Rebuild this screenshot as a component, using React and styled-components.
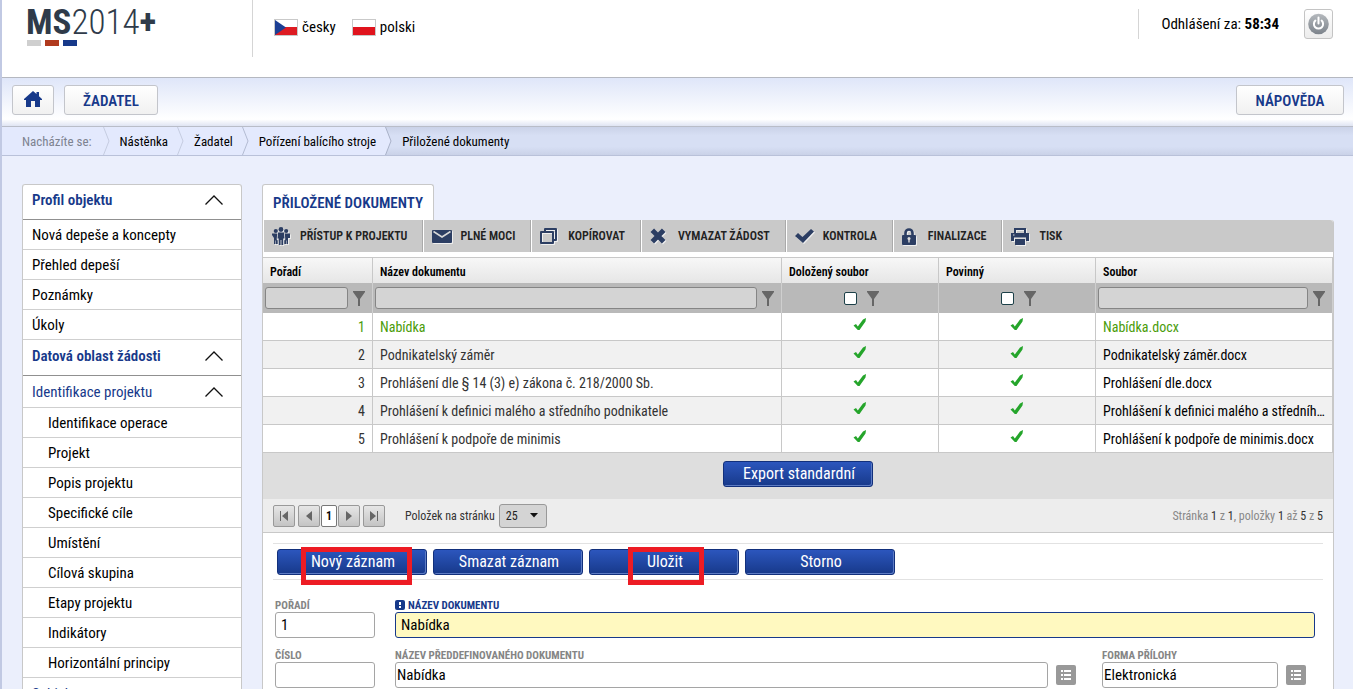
import React from 'react';
import styled, { createGlobalStyle } from 'styled-components';

const GlobalStyle = createGlobalStyle`
  *, *::after {
    box-sizing: border-box;
  }

  body {
    margin: 0;
    font-family: "Roboto Condensed", "Liberation Sans Narrow", Roboto, sans-serif;
    font-size: 15px;
    color: #000;
    background: #ebeffc;
  }

  input, button, select {
    font-family: inherit;
  }

  a {
    color: inherit;
    text-decoration: none;
  }
`;

const Page = styled.div`
  height: 100vh;
  overflow: hidden;
  border-left: 2px solid #c1c9e3;
`;

const Header = styled.header`
  display: flex;
  height: 78px;
  background: #fff;
  border-bottom: 1px solid #b5b8c0;
`;

const Brand = styled.div`
  width: 251px;
  height: 57px;
  padding: 5px 0 0 24px;
  border-right: 1px solid #d5d5d5;
  color: #2f3b4a;
`;

const BrandName = styled.div`
  font-size: 35px;
  line-height: 35px;
  font-weight: 300;

  b {
    font-weight: 700;
  }
`;

const Bars = styled.div`
  display: flex;
  gap: 4px;
  padding-left: 1px;
`;

const Bar = styled.span`
  width: 14px;
  height: 6px;
  background: ${props => props.$color};
`;

const Languages = styled.nav`
  display: flex;
  gap: 16px;
  height: 18px;
  margin: 18px 0 0 21px;
`;

const Language = styled.a`
  display: flex;
  align-items: center;
  gap: 4px;
  line-height: 18px;
`;

const Session = styled.div`
  display: flex;
  align-items: center;
  gap: 25px;
  height: 30px;
  margin: 9px 20px 0 auto;
  padding-left: 22px;
  border-left: 1px solid #d5d5d5;
`;

const PowerButton = styled.button`
  width: 29px;
  height: 30px;
  padding: 3px;
  border: 1px solid #c4c4c4;
  border-radius: 3px;
  background: linear-gradient(#fff, #ececec);
`;

const TopBar = styled.nav`
  display: flex;
  gap: 10px;
  height: 49px;
  padding: 7px 9px 0 10px;
  border-bottom: 1px solid #b9bdc8;
  background: linear-gradient(#dfe6f9, #fff 86%, #dfe4f3);
`;

const TopButton = styled.button`
  width: ${props => props.$width}px;
  height: 30px;
  margin-left: ${props => (props.$right ? 'auto' : '0')};
  padding: 2px 0 0;
  border: 1px solid #c3c5cb;
  border-radius: 3px;
  background: linear-gradient(#fff, #f1f1f1);
  color: #17398a;
  font-size: 15px;
  font-weight: 600;
`;

const Crumbs = styled.nav`
  display: flex;
  height: 29px;
  border-bottom: 1px solid #b9c1d9;
  background: linear-gradient(#cad2e8, #d7dff4 30%, #d7dff4 70%, #cad2e8);
  font-size: 13px;
  line-height: 28px;
`;

const Crumb = styled.a`
  padding: ${props => (props.$first ? '1px 11px 0 20px' : '1px 9px 0 10px')};
  background: ${props => (props.$current ? 'transparent' : '#e3e9fd')};
  color: ${props => (props.$first ? '#7d8390' : '#000')};
`;

const Body = styled.div`
  display: flex;
  align-items: flex-start;
  gap: 20px;
  padding: 28px 19px 0 20px;
`;

const Sidebar = styled.nav`
  flex: 0 0 220px;
  border: 1px solid #c8c8c8;
  border-top: none;
  border-radius: 3px;
  background: #fff;
  box-shadow: inset 0 1px 0 #c8c8c8;
`;

const SideItem = styled.a`
  display: flex;
  justify-content: space-between;
  align-items: center;
  height: ${props => (props.$group ? '32px' : '30px')};
  padding: 0 17px 0 ${props => (props.$sub ? '25px' : '9px')};
  border-bottom: 1px solid #cfcfcf;
  color: ${props => (props.$group ? '#17398a' : '#000')};
`;

const SideTitle = styled.a`
  display: flex;
  justify-content: space-between;
  height: 36px;
  padding: 0 17px 4px 9px;
  align-items: center;
  border-bottom: 1px solid #909090;
  color: #17398a;
  font-weight: 600;
`;

const Main = styled.main`
  flex: 1;
  min-width: 0;
`;

const Tab = styled.h1`
  width: fit-content;
  height: 36px;
  margin: 0;
  padding: 0 10px;
  border: 1px solid #c8c8c8;
  border-bottom: none;
  border-radius: 3px 3px 0 0;
  background: #fff;
  color: #17398a;
  font-size: 15px;
  font-weight: 600;
  line-height: 36px;
`;

const Panel = styled.section`
  border: 1px solid #c8c8c8;
  border-top: none;
  border-radius: 0 3px 0 0;
  background: #fff;
`;

const Toolbar = styled.div`
  display: flex;
  height: 32px;
  margin-bottom: 5px;
  background: #c9c9c9;
  border-radius: 0 3px 0 0;
`;

const Tool = styled.button`
  display: flex;
  align-items: center;
  gap: ${props => props.$gap || 8}px;
  padding: 0 15px 0 8px;
  border: none;
  border-left: 1px solid #fff;
  border-right: ${props => (props.$last ? 'none' : '1px solid #aaa')};
  background: none;
  color: #222;
  font-size: 12px;
  font-weight: 600;

  svg {
    filter: drop-shadow(1px 1px 0 #eee);
  }
`;

const Table = styled.table`
  width: 100%;
  table-layout: fixed;
  border-collapse: separate;
  border-spacing: 0;
  border-top: 1px solid #c8c8c8;
`;

const HeadCell = styled.th`
  height: 25px;
  padding: 2px 7px 0;
  border-right: 1px solid #c8c8c8;
  background: linear-gradient(#f7f7f7, #e6e6e6);
  font-size: 12px;
  font-weight: 600;
  text-align: left;
`;

const FilterCell = styled.td`
  height: 30px;
  padding: 0 7px 0 2px;
  border-right: 1px solid #cfcfcf;
  background: #b9b9b9;
`;

const Filter = styled.div`
  display: flex;
  align-items: center;
  justify-content: center;
  gap: 5px;
`;

const FilterInput = styled.input`
  flex: 1;
  min-width: 0;
  height: 22px;
  border: 1px solid #858585;
  border-radius: 3px;
  background: #d4d4d4;
`;

const FilterCheck = styled.input`
  appearance: none;
  width: 13px;
  height: 13px;
  margin: 0 5px 0 8px;
  border: 1px solid #1c4048;
  border-radius: 2px;
  background: #fff;
`;

const Cell = styled.td`
  height: 28px;
  padding: 1px 7px 0;
  overflow: hidden;
  border-right: 1px solid #c8c8c8;
  border-bottom: 1px solid #c8c8c8;
  font-size: 14px;
  text-align: ${props => props.$align || 'left'};
  text-overflow: ellipsis;
  white-space: nowrap;
  color: ${props => (props.$dark ? '#000' : '#333')};

  svg {
    display: block;
    margin: 0 auto 5px;
  }
`;

const Row = styled.tr`
  background: ${props => (props.$odd ? '#f1f1f1' : '#fff')};

  ${Cell} {
    ${props => props.$active && 'color: #4a9c0a;'}
  }
`;

const ExportBar = styled.div`
  display: flex;
  justify-content: center;
  height: 46px;
  padding-top: 8px;
  background: #dedede;
`;

const BlueButton = styled.button`
  width: 150px;
  height: 26px;
  padding: 0 0 2px 2px;
  border: 1px solid #12307c;
  border-radius: 3px;
  background: linear-gradient(#2c56bd, #17398a);
  box-shadow: inset -1px -1px 0 #5d7cc4;
  color: #fff;
  font-size: 16px;
`;

const Pager = styled.div`
  display: flex;
  align-items: center;
  height: 34px;
  padding: 0 10px;
  border-bottom: 1px solid #c8c8c8;
  background: #ededed;
  color: #333;
  font-size: 12px;
`;

const PageButtons = styled.div`
  display: flex;
  gap: 3px;
  margin-right: 20px;
`;

const PageButton = styled.button`
  display: flex;
  align-items: center;
  justify-content: center;
  width: 22px;
  height: 22px;
  padding: 0;
  border: 1px solid #999;
  border-radius: 2px;
  background: linear-gradient(#e6e6e6, #c4c4c4);
`;

const CurrentPage = styled.button`
  width: 16px;
  height: 22px;
  margin: 0 -2px;
  padding: 0;
  border: 1px solid #777;
  border-radius: 2px;
  background: #fff;
  font-size: 12px;
  font-weight: 600;
`;

const SizeLabel = styled.label`
  display: flex;
  align-items: center;
  gap: 4px;
`;

const SelectWrap = styled.span`
  position: relative;

  svg {
    position: absolute;
    top: 9px;
    right: 9px;
    pointer-events: none;
  }
`;

const SizeSelect = styled.select`
  appearance: none;
  width: 48px;
  height: 24px;
  padding: 0 6px;
  border: 1px solid #999;
  border-radius: 3px;
  background: #d4d4d4;
  color: #222;
  font-size: 12px;
`;

const PageInfo = styled.span`
  margin-left: auto;
  color: #888;

  span {
    color: #333;
  }
`;

const Actions = styled.div`
  display: flex;
  gap: 6px;
  height: 37px;
  margin: 10px 10px 0;
  padding: 5px 4px;
  border-top: 1px solid #e2e2e2;
  border-bottom: 1px solid #e2e2e2;
`;

const Marked = styled.div`
  position: relative;

  &::after {
    content: '';
    position: absolute;
    top: -2px;
    left: ${props => props.$left}px;
    width: ${props => props.$width}px;
    height: 38px;
    border: 5px solid #ed1c24;
    pointer-events: none;
  }
`;

const FormRow = styled.div`
  display: flex;
  gap: 20px;
  height: 50px;
  padding: 0 ${props => (props.$pickers ? '21px' : '18px')} 0 12px;
`;

const Form = styled.form`
  padding-top: 18px;
`;

const Field = styled.div`
  flex: ${props => (props.$width ? `0 0 ${props.$width}px` : '1')};
  min-width: 0;
`;

const FieldLabel = styled.label`
  display: flex;
  align-items: center;
  gap: 3px;
  height: 14px;
  color: ${props => (props.$required ? '#17398a' : '#858585')};
  font-size: 11px;
  font-weight: 700;
`;

const FieldControl = styled.div`
  display: flex;
  align-items: center;
  gap: 8px;
  padding-right: ${props => (props.$picker ? '6px' : '0')};
`;

const TextInput = styled.input`
  flex: 1;
  min-width: 0;
  height: 26px;
  padding: 0 ${props => (props.$tight ? '1px' : '5px')};
  border: 1px solid ${props => (props.$required ? '#17398a' : '#a5a5a5')};
  border-radius: 3px;
  background: ${props => (props.$required ? '#fff9c0' : '#fff')};
  color: #000;
  font-size: 15px;
`;

const ListButton = styled.button`
  width: 20px;
  height: 20px;
  padding: 0;
  border: none;
  border-radius: 2px;
  background: #999;

  svg {
    display: block;
  }
`;

const CzechFlag = () => (
  <svg width="24" height="17" viewBox="0 0 24 17">
    <rect width="24" height="17" fill="#c9c9c9" />
    <rect x="1" y="1" width="22" height="7" fill="#fff" />
    <rect x="1" y="8" width="22" height="8" fill="#dd1b22" />
    <path d="M1 1l11 7.500L1 16z" fill="#1c3f94" />
  </svg>
);

const PolishFlag = () => (
  <svg width="24" height="17" viewBox="0 0 24 17">
    <rect width="24" height="17" fill="#c9c9c9" />
    <rect x="1" y="1" width="22" height="7" fill="#fff" />
    <rect x="1" y="8" width="22" height="8" fill="#e0131d" />
  </svg>
);

const PowerIcon = () => (
  <svg width="21" height="22" viewBox="0 0 21 22">
    <defs>
      <linearGradient id="power" x1="0" y1="0" x2="0" y2="1">
        <stop offset="0" stopColor="#b5b9bd" />
        <stop offset="1" stopColor="#7c838b" />
      </linearGradient>
    </defs>
    <circle cx="10.500" cy="11" r="10.300" fill="url(#power)" />
    <path d="M7.400 7.600a4.600 4.600 0 1 0 6.200 0M10.500 4.500v6" fill="none" stroke="#fff" strokeWidth="2" strokeLinecap="round" />
  </svg>
);

const HomeIcon = () => (
  <svg width="18" height="16" viewBox="0 0 18 16">
    <path d="M9 0l3.500 3V1H15v4.300L18 8v1h-2v7h-5v-6H7v6H2V9H0V8z" fill="#17398a" />
  </svg>
);

const Chevron = () => (
  <svg width="20" height="12" viewBox="0 0 20 12">
    <path d="M1.500 10.500L10 2l8.500 8.500" fill="none" stroke="#111" strokeWidth="1.300" />
  </svg>
);

const CrumbArrow = ({ before = '#e3e9fd', after = '#e3e9fd', stroke = '#c5cce0' }) => (
  <svg width="7" height="28" viewBox="0 0 7 28">
    <rect width="7" height="28" fill={after} />
    <path d="M0 0h.5L6 14L.5 28H0z" fill={before} />
    <path d="M.5 0L6 14L.5 28" fill="none" stroke={stroke} />
  </svg>
);

const PeopleIcon = () => (
  <svg width="18" height="18" viewBox="0 0 18 18" fill="#2c3e63">
    <circle cx="9" cy="2.500" r="2.400" />
    <circle cx="3.800" cy="4" r="2.100" />
    <circle cx="14.200" cy="4" r="2.100" />
    <path d="M6 5.500h6l.5 6h-1.300V18H9.400v-5h-.8v5H6.800v-6.500H5.500z" />
    <path d="M0 6.500h5.200l-.5 6 1 1V17H4v-3.500h-.5V17H2v-6L0 8zM18 6.500h-5.200l.5 6-1 1V17H14v-3.500h.5V17H16v-6h2z" />
  </svg>
);

const MailIcon = () => (
  <svg width="20" height="13" viewBox="0 0 20 13">
    <rect width="20" height="13" rx="1" fill="#2c3e63" />
    <path d="M1.500 1.500L10 7l8.500-5.500" fill="none" stroke="#d8d8d8" strokeWidth="1.500" />
  </svg>
);

const CopyIcon = () => (
  <svg width="18" height="18" viewBox="0 0 18 18" fill="none" stroke="#2c3e63" strokeWidth="2" strokeLinejoin="round">
    <path d="M5 4V2h11v11h-2" />
    <rect x="1" y="5" width="12" height="11" />
  </svg>
);

const CrossIcon = () => (
  <svg width="16" height="16" viewBox="0 0 16 16">
    <path d="M2.300 2.300l11.400 11.400M13.700 2.300l-11.400 11.400" stroke="#2c3e63" strokeWidth="5" />
  </svg>
);

const TickIcon = () => (
  <svg width="20" height="16" viewBox="0 0 20 16">
    <path d="M0 8l3-3 4.500 4L16 1l3 2.500L8 15z" fill="#2c3e63" />
  </svg>
);

const LockIcon = () => (
  <svg width="14" height="17" viewBox="0 0 14 17">
    <path d="M3.500 8V5a3.500 3.500 0 0 1 7 0v3" fill="none" stroke="#2c3e63" strokeWidth="2.600" />
    <rect y="7" width="14" height="10" rx="1" fill="#2c3e63" />
    <circle cx="7" cy="10.500" r="1.500" fill="#ddd" />
    <path d="M6.300 11h1.400v3.500H6.300z" fill="#ddd" />
  </svg>
);

const PrintIcon = () => (
  <svg width="18" height="17" viewBox="0 0 18 17">
    <path d="M4 6V1h10v5" fill="none" stroke="#2c3e63" strokeWidth="2" />
    <path d="M0 5h18v8h-3V9.500H3V13H0z" fill="#2c3e63" />
    <path d="M4 11h10v6H4z" fill="#2c3e63" />
    <path d="M2 7h1.500" stroke="#ddd" />
  </svg>
);

const FunnelIcon = () => (
  <svg width="12" height="15" viewBox="0 0 12 15">
    <path d="M0 0h12v1L7 8v7H5V8L0 1z" fill="#666" />
  </svg>
);

const GreenCheck = () => (
  <svg width="14" height="13" viewBox="0 0 14 13">
    <path d="M.5 7.500L3 6l1.800 2.500L10 1.500 13 0l-.5 3.500L6.500 12H4.800z" fill="#25a52b" />
  </svg>
);

const PagerIcon = ({ d }) => (
  <svg width="10" height="10" viewBox="0 0 10 10">
    <path d={d} fill="#666" />
  </svg>
);

const CaretIcon = () => (
  <svg width="8" height="5" viewBox="0 0 8 5">
    <path d="M0 0h8L4 4.500z" fill="#111" />
  </svg>
);

const RequiredIcon = () => (
  <svg width="10" height="10" viewBox="0 0 10 10">
    <rect width="10" height="10" rx="2" fill="#17398a" />
    <path d="M4 2h2v3H4zM4 6h2v2H4z" fill="#fff" />
  </svg>
);

const ListIcon = () => (
  <svg width="20" height="20" viewBox="0 0 20 20">
    <path d="M5 5h2v2H5zM8 5h7v2H8zM5 9h2v2H5zM8 9h7v2H8zM5 13h2v2H5zM8 13h7v2H8z" fill="#fff" />
  </svg>
);

const tools = [
  { label: 'PŘÍSTUP K PROJEKTU', icon: <PeopleIcon />, gap: 10 },
  { label: 'PLNÉ MOCI', icon: <MailIcon /> },
  { label: 'KOPÍROVAT', icon: <CopyIcon />, gap: 10 },
  { label: 'VYMAZAT ŽÁDOST', icon: <CrossIcon />, gap: 12 },
  { label: 'KONTROLA', icon: <TickIcon /> },
  { label: 'FINALIZACE', icon: <LockIcon />, gap: 12 },
  { label: 'TISK', icon: <PrintIcon />, gap: 10 },
];

const documents = [
  { name: 'Nabídka', file: 'Nabídka.docx' },
  { name: 'Podnikatelský záměr', file: 'Podnikatelský záměr.docx' },
  { name: 'Prohlášení dle § 14 (3) e) zákona č. 218/2000 Sb.', file: 'Prohlášení dle.docx' },
  { name: 'Prohlášení k definici malého a středního podnikatele', file: 'Prohlášení k definici malého a středníh...' },
  { name: 'Prohlášení k podpoře de minimis', file: 'Prohlášení k podpoře de minimis.docx' },
];

const profileItems = ['Nová depeše a koncepty', 'Přehled depeší', 'Poznámky', 'Úkoly'];

const projectItems = [
  'Identifikace operace',
  'Projekt',
  'Popis projektu',
  'Specifické cíle',
  'Umístění',
  'Cílová skupina',
  'Etapy projektu',
  'Indikátory',
  'Horizontální principy',
];

const App = () => (
  <>
    <GlobalStyle />
    <Page>
      <Header>
        <Brand>
          <BrandName><b>MS</b>2014<b>+</b></BrandName>
          <Bars>
            <Bar $color="#cfcfcf" />
            <Bar $color="#b03a1e" />
            <Bar $color="#17398a" />
          </Bars>
        </Brand>
        <Languages>
          <Language href="#cs"><CzechFlag />česky</Language>
          <Language href="#pl"><PolishFlag />polski</Language>
        </Languages>
        <Session>
          <span>Odhlášení za: <b>58:34</b></span>
          <PowerButton type="button" aria-label="Odhlásit"><PowerIcon /></PowerButton>
        </Session>
      </Header>
      <TopBar>
        <TopButton type="button" $width={42} aria-label="Domů"><HomeIcon /></TopButton>
        <TopButton type="button" $width={94}>ŽADATEL</TopButton>
        <TopButton type="button" $width={108} $right>NÁPOVĚDA</TopButton>
      </TopBar>
      <Crumbs>
        <Crumb as="span" $first>Nacházíte se:</Crumb>
        <CrumbArrow />
        <Crumb href="#nastenka">Nástěnka</Crumb>
        <CrumbArrow />
        <Crumb href="#zadatel">Žadatel</Crumb>
        <CrumbArrow stroke="#b3bbd2" />
        <Crumb href="#projekt">Pořízení balícího stroje</Crumb>
        <CrumbArrow after="none" stroke="#a9b1c8" />
        <Crumb href="#dokumenty" $current>Přiložené dokumenty</Crumb>
      </Crumbs>
      <Body>
        <Sidebar>
          <SideTitle href="#profil">Profil objektu <Chevron /></SideTitle>
          {profileItems.map(item => (
            <SideItem href="#profil" key={item}>{item}</SideItem>
          ))}
          <SideTitle href="#data">Datová oblast žádosti <Chevron /></SideTitle>
          <SideItem href="#identifikace" $group>Identifikace projektu <Chevron /></SideItem>
          {projectItems.map(item => (
            <SideItem href="#identifikace" key={item} $sub>{item}</SideItem>
          ))}
          <SideItem href="#subjekty" $group>Subjekty <Chevron /></SideItem>
        </Sidebar>
        <Main>
          <Tab>PŘILOŽENÉ DOKUMENTY</Tab>
          <Panel>
            <Toolbar>
              {tools.map((tool, i) => (
                <Tool type="button" key={tool.label} $gap={tool.gap} $last={i === tools.length - 1}>
                  {tool.icon}
                  {tool.label}
                </Tool>
              ))}
            </Toolbar>
            <Table>
              <colgroup>
                <col width="110" />
                <col />
                <col width="157" />
                <col width="157" />
                <col width="237" />
              </colgroup>
              <thead>
                <tr>
                  <HeadCell>Pořadí</HeadCell>
                  <HeadCell>Název dokumentu</HeadCell>
                  <HeadCell>Doložený soubor</HeadCell>
                  <HeadCell>Povinný</HeadCell>
                  <HeadCell>Soubor</HeadCell>
                </tr>
                <tr>
                  <FilterCell><Filter><FilterInput aria-label="Pořadí" /><FunnelIcon /></Filter></FilterCell>
                  <FilterCell><Filter><FilterInput aria-label="Název dokumentu" /><FunnelIcon /></Filter></FilterCell>
                  <FilterCell><Filter><FilterCheck type="checkbox" aria-label="Doložený soubor" /><FunnelIcon /></Filter></FilterCell>
                  <FilterCell><Filter><FilterCheck type="checkbox" aria-label="Povinný" /><FunnelIcon /></Filter></FilterCell>
                  <FilterCell><Filter><FilterInput aria-label="Soubor" /><FunnelIcon /></Filter></FilterCell>
                </tr>
              </thead>
              <tbody>
                {documents.map((doc, i) => (
                  <Row key={doc.name} $odd={i % 2 === 1} $active={i === 0}>
                    <Cell $align="right">{i + 1}</Cell>
                    <Cell>{doc.name}</Cell>
                    <Cell><GreenCheck /></Cell>
                    <Cell><GreenCheck /></Cell>
                    <Cell $dark>{doc.file}</Cell>
                  </Row>
                ))}
              </tbody>
            </Table>
            <ExportBar>
              <BlueButton type="button">Export standardní</BlueButton>
            </ExportBar>
            <Pager>
              <PageButtons>
                <PageButton type="button" aria-label="První"><PagerIcon d="M1 0h1v10H1zM9 0v10L3 5z" /></PageButton>
                <PageButton type="button" aria-label="Předchozí"><PagerIcon d="M8 0v10L2 5z" /></PageButton>
                <CurrentPage type="button">1</CurrentPage>
                <PageButton type="button" aria-label="Další"><PagerIcon d="M2 0v10l6-5z" /></PageButton>
                <PageButton type="button" aria-label="Poslední"><PagerIcon d="M1 0v10l6-5zM8 0h1v10H8z" /></PageButton>
              </PageButtons>
              <SizeLabel>
                Položek na stránku
                <SelectWrap>
                  <SizeSelect defaultValue="25">
                    <option>25</option>
                    <option>50</option>
                  </SizeSelect>
                  <CaretIcon />
                </SelectWrap>
              </SizeLabel>
              <PageInfo>
                Stránka <span>1</span> z <span>1</span>, položky <span>1</span> až <span>5</span> z <span>5</span>
              </PageInfo>
            </Pager>
            <Actions>
              <Marked $left={24} $width={111}><BlueButton type="button">Nový záznam</BlueButton></Marked>
              <BlueButton type="button">Smazat záznam</BlueButton>
              <Marked $left={39} $width={76}><BlueButton type="button">Uložit</BlueButton></Marked>
              <BlueButton type="button">Storno</BlueButton>
            </Actions>
            <Form>
              <FormRow>
                <Field $width={100}>
                  <FieldLabel htmlFor="order">POŘADÍ</FieldLabel>
                  <FieldControl><TextInput id="order" defaultValue="1" /></FieldControl>
                </Field>
                <Field>
                  <FieldLabel htmlFor="name" $required><RequiredIcon />NÁZEV DOKUMENTU</FieldLabel>
                  <FieldControl><TextInput id="name" defaultValue="Nabídka" $required /></FieldControl>
                </Field>
              </FormRow>
              <FormRow $pickers>
                <Field $width={100}>
                  <FieldLabel htmlFor="number">ČÍSLO</FieldLabel>
                  <FieldControl><TextInput id="number" /></FieldControl>
                </Field>
                <Field>
                  <FieldLabel htmlFor="predefined">NÁZEV PŘEDDEFINOVANÉHO DOKUMENTU</FieldLabel>
                  <FieldControl $picker>
                    <TextInput id="predefined" defaultValue="Nabídka" $tight />
                    <ListButton type="button" aria-label="Vybrat dokument"><ListIcon /></ListButton>
                  </FieldControl>
                </Field>
                <Field $width={210}>
                  <FieldLabel htmlFor="form">FORMA PŘÍLOHY</FieldLabel>
                  <FieldControl $picker>
                    <TextInput id="form" defaultValue="Elektronická" $tight />
                    <ListButton type="button" aria-label="Vybrat formu"><ListIcon /></ListButton>
                  </FieldControl>
                </Field>
              </FormRow>
            </Form>
          </Panel>
        </Main>
      </Body>
    </Page>
  </>
);

export default App;
